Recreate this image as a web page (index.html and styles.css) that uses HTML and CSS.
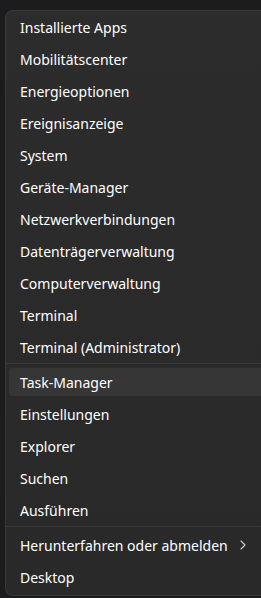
FILE: index.html
```html
<!DOCTYPE html>
<html lang="de">
<head>
    <meta charset="UTF-8">
    <meta name="viewport" content="width=device-width, initial-scale=1.0">
    <title>Schnellzugriffsmenü</title>
    <link rel="stylesheet" href="styles.css">
</head>
<body>
    <div class="menu">
        <div class="item"><span class="label">Installierte Apps</span></div>
        <div class="item"><span class="label">Mobilitätscenter</span></div>
        <div class="item"><span class="label">Energieoptionen</span></div>
        <div class="item"><span class="label">Ereignisanzeige</span></div>
        <div class="item"><span class="label">System</span></div>
        <div class="item"><span class="label">Geräte-Manager</span></div>
        <div class="item"><span class="label">Netzwerkverbindungen</span></div>
        <div class="item"><span class="label">Datenträgerverwaltung</span></div>
        <div class="item"><span class="label">Computerverwaltung</span></div>
        <div class="item"><span class="label">Terminal</span></div>
        <div class="item"><span class="label">Terminal (Administrator)</span></div>
        <div class="separator"></div>
        <div class="item"><span class="label hover">Task-Manager</span></div>
        <div class="item"><span class="label">Einstellungen</span></div>
        <div class="item"><span class="label">Explorer</span></div>
        <div class="item"><span class="label">Suchen</span></div>
        <div class="item"><span class="label">Ausführen</span></div>
        <div class="separator"></div>
        <div class="item">
            <span class="label">Herunterfahren oder abmelden
                <svg class="chevron" width="6" height="10" viewBox="0 0 6 10">
                    <path d="M1 1 L5 5 L1 9" fill="none" stroke="#cfcfcf" stroke-width="1.1" stroke-linecap="round" stroke-linejoin="round"/>
                </svg>
            </span>
        </div>
        <div class="item"><span class="label">Desktop</span></div>
    </div>
</body>
</html>
```

FILE: styles.css
```css
html, body { margin: 0; height: 100%; overflow: hidden; }
body { background: #1c1c1e; font-family: "Noto Sans", "Open Sans", sans-serif; font-size: 14px; color: #ffffff; }
.menu { margin: 10px 0 0 5px; padding: 0 0 2px; background: linear-gradient(180deg, #2c2c2c 0%, #292929 100%); border: 1px solid #383838; border-right: none; border-radius: 8px 0 0 8px; }
.item { height: 32px; padding: 2px 0 2px 3px; box-sizing: border-box; }
.label { display: flex; align-items: center; height: 28px; padding-left: 11px; border-radius: 4px 0 0 4px; white-space: nowrap; }
.hover { background: #363636; }
.chevron { margin-left: auto; margin-right: 15px; }
.separator { height: 1px; background: #3a3a3a; margin-bottom: 2px; }
```
